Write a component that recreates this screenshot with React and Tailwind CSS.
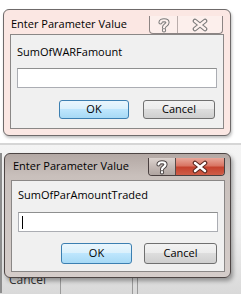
import React from 'react';

const font = { fontFamily: '"Open Sans", "Noto Sans", sans-serif' };

// outlined glyphs for the caption buttons
function HelpGlyph({ fill, stroke }) {
  const d = "M3.5 5.5 C3.5 2.5 10.5 2.5 10.5 5.5 C10.5 8 7 8 7 10.5 M7 13 L7 13.5";
  return (
    <svg width="14" height="16" viewBox="0 0 14 16">
      <path d={d} fill="none" stroke={stroke} strokeWidth="4.2" strokeLinecap="round" />
      <path d={d} fill="none" stroke={fill} strokeWidth="2.2" strokeLinecap="round" />
    </svg>
  );
}

function CloseGlyph({ fill, stroke }) {
  const d = "M3 3 L13 11 M13 3 L3 11";
  return (
    <svg width="16" height="14" viewBox="0 0 16 14">
      <path d={d} fill="none" stroke={stroke} strokeWidth="4.6" strokeLinecap="round" />
      <path d={d} fill="none" stroke={fill} strokeWidth="2.4" strokeLinecap="round" />
    </svg>
  );
}

function CaptionButtons({ active }) {
  if (!active) {
    return (
      <div className="-mt-[1px] mr-[7px] flex h-[18px] w-[74px] rounded-b-[4px] border border-t-0 border-[#8c8483] bg-[#fcefec]">
        <div className="flex w-[28px] items-center justify-center border-r border-[#b9adab]">
          <HelpGlyph fill="#fdf1ee" stroke="#7a7a7a" />
        </div>
        <div className="flex flex-1 items-center justify-center">
          <CloseGlyph fill="#fdf1ee" stroke="#7a7a7a" />
        </div>
      </div>
    );
  }
  return (
    <div className="-mt-[1px] mr-[5px] flex h-[18px] w-[77px] overflow-hidden rounded-b-[4px] border border-t-0 border-[#4a4040]">
      <div className="flex w-[27px] items-center justify-center border-r border-[#5a4a48] bg-[linear-gradient(#dcd3cf_0%,#c4b9b5_50%,#b0a5a1_100%)]">
        <HelpGlyph fill="#ffffff" stroke="#4b4444" />
      </div>
      <div className="flex flex-1 items-center justify-center bg-[linear-gradient(#e9a89b_0%,#d97563_45%,#c5422e_55%,#cf5d48_100%)]">
        <CloseGlyph fill="#ffffff" stroke="#5a2a22" />
      </div>
    </div>
  );
}

const btnGray =
  "flex items-center justify-center rounded-[3px] border border-[#707070] bg-[linear-gradient(#f2f2f2_0%,#ebebeb_50%,#dddddd_50%,#cfcfcf_100%)] text-[11px] text-black";
const btnBlue =
  "flex items-center justify-center rounded-[3px] border border-[#3c7fb1] bg-[linear-gradient(#eaf6fd_0%,#d9f0fc_50%,#bee6fd_50%,#a7d9f5_100%)] text-[11px] text-black";

function ParamDialog({ label, active }) {
  const s = active
    ? {
        outer: "w-[227px] h-[125px] border-[#4d4544] bg-[linear-gradient(180deg,#b3a8a4_0%,#c9c0bc_18%,#d5cdca_100%)] shadow-[2px_3px_4px_rgba(0,0,0,0.35)]",
        title: "h-[26px] pl-[8px] pt-[5px]",
        panel: "ml-[6px] w-[214px] h-[92px] pt-[7px]",
        input: "mt-[10px] h-[20px]",
        row: "mt-[11px] pr-[7px] gap-[12px]",
        ok: "w-[71px] h-[21px] border-[#2f8ad4]",
        cancel: "w-[73px] h-[21px]",
      }
    : {
        outer: "w-[228px] h-[127px] border-[#6e6a6a] bg-[#fbe7e3] shadow-[1px_2px_3px_rgba(0,0,0,0.25)]",
        title: "h-[24px] pl-[7px] pt-[7px]",
        panel: "ml-[6px] w-[214px] h-[95px] pt-[10px]",
        input: "mt-[9px] h-[20px]",
        row: "mt-[12px] pr-[8px] gap-[14px]",
        ok: "w-[70px] h-[19px]",
        cancel: "w-[72px] h-[19px]",
      };

  return (
    <div className={`flex flex-col rounded-[6px] border ${s.outer}`} style={font}>
      <div className={`flex items-start justify-between ${s.title}`}>
        <span className="text-[11px] leading-[14px] text-black">Enter Parameter Value</span>
        <CaptionButtons active={active} />
      </div>
      <div className={`flex flex-col border border-[#8a8786] bg-[#f0f0f0] pl-[6px] ${s.panel}`}>
        <span className="text-[11px] leading-[14px] text-black">{label}</span>
        <div className={`flex w-[200px] items-center border border-[#abadb3] border-t-[#8e8f8f] bg-white pl-[3px] ${s.input}`}>
          {active && <span className="h-[13px] w-[1px] bg-black" />}
        </div>
        <div className={`flex justify-end ${s.row}`}>
          <button className={`${btnBlue} ${s.ok}`}>OK</button>
          <button className={`${btnGray} ${s.cancel}`}>Cancel</button>
        </div>
      </div>
    </div>
  );
}

export default function App() {
  return (
    <div className="flex h-[294px] w-[241px] flex-col overflow-hidden bg-white">
      {/* first capture: inactive dialog over a blank sheet */}
      <div className="flex h-[145px] flex-col border-b-2 border-[#d6d6d6] bg-white pl-[3px] pt-[9px]">
        <ParamDialog label="SumOfWARFamount" active={false} />
      </div>

      {/* second capture: active dialog over the form */}
      <div className="relative flex flex-1 flex-col bg-[linear-gradient(180deg,#f4f4f4_0%,#ededed_60%,#d9d9d9_100%)] pl-[4px] pt-[8px]">
        <div className="absolute left-0 top-[8px] h-[140px] w-[2px] bg-[#8d8d8d]" />
        <div className="absolute left-[60px] top-[130px] h-[20px] w-[1px] bg-[#9a9a9a]" />
        <div className="absolute left-[132px] top-[130px] h-[20px] w-[1px] bg-[#9a9a9a]" />
        <div className="absolute left-[137px] top-[130px] h-[20px] w-[1px] bg-[#9a9a9a]" />
        <span className="absolute left-[9px] top-[128px] text-[12px] leading-[14px] text-[#333]" style={font}>Cancel</span>
        <div className="relative">
          <ParamDialog label="SumOfParAmountTraded" active />
        </div>
      </div>
    </div>
  );
}
